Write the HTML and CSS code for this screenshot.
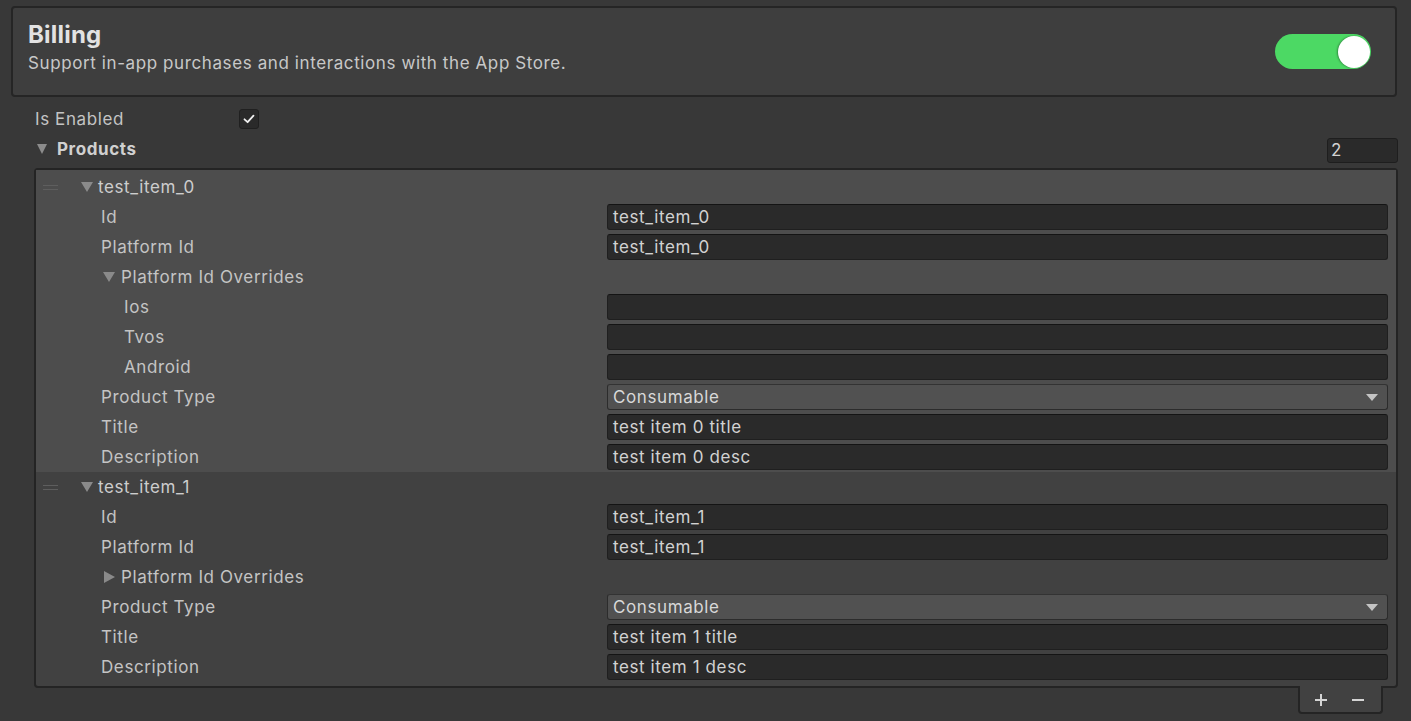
FILE: index.html
```html
<!DOCTYPE html>
<html>
<head>
<meta charset="utf-8">
<link rel="stylesheet" href="styles.css">
</head>
<body>
<div class="page">
  <header class="header">
    <div class="header-text">
      <div class="title">Billing</div>
      <div class="subtitle">Support in-app purchases and interactions with the App Store.</div>
    </div>
    <div class="toggle"><div class="knob"></div></div>
  </header>

  <div class="prop-row enabled-row">
    <span class="lbl">Is Enabled</span>
    <span class="checkbox">
      <svg width="14" height="14" viewBox="0 0 14 14"><path d="M2.5 7.3 L5.6 10.2 L11.5 3.6" fill="none" stroke="#f0f0f0" stroke-width="1.8" stroke-linecap="round" stroke-linejoin="round"/></svg>
    </span>
  </div>

  <div class="prop-row products-row">
    <span class="tri down"></span>
    <span class="lbl bold">Products</span>
    <span class="count">2</span>
  </div>

  <div class="list">
    <div class="item item-hl">
      <div class="row item-head">
        <div class="labelcell"><span class="handle"></span><span class="tri down small"></span><span class="name">test_item_0</span></div>
      </div>
      <div class="row"><div class="labelcell l1">Id</div><div class="field">test_item_0</div></div>
      <div class="row"><div class="labelcell l1">Platform Id</div><div class="field">test_item_0</div></div>
      <div class="row"><div class="labelcell l1f"><span class="tri down small"></span><span>Platform Id Overrides</span></div></div>
      <div class="row"><div class="labelcell l2">Ios</div><div class="field"></div></div>
      <div class="row"><div class="labelcell l2">Tvos</div><div class="field"></div></div>
      <div class="row"><div class="labelcell l2">Android</div><div class="field"></div></div>
      <div class="row"><div class="labelcell l1">Product Type</div><div class="field dropdown">Consumable<span class="arrow"></span></div></div>
      <div class="row"><div class="labelcell l1">Title</div><div class="field">test item 0 title</div></div>
      <div class="row"><div class="labelcell l1">Description</div><div class="field">test item 0 desc</div></div>
    </div>
    <div class="item">
      <div class="row item-head">
        <div class="labelcell"><span class="handle"></span><span class="tri down small"></span><span class="name">test_item_1</span></div>
      </div>
      <div class="row"><div class="labelcell l1">Id</div><div class="field">test_item_1</div></div>
      <div class="row"><div class="labelcell l1">Platform Id</div><div class="field">test_item_1</div></div>
      <div class="row"><div class="labelcell l1f"><span class="tri right small"></span><span>Platform Id Overrides</span></div></div>
      <div class="row"><div class="labelcell l1">Product Type</div><div class="field dropdown">Consumable<span class="arrow"></span></div></div>
      <div class="row"><div class="labelcell l1">Title</div><div class="field">test item 1 title</div></div>
      <div class="row"><div class="labelcell l1">Description</div><div class="field">test item 1 desc</div></div>
    </div>
  </div>
  <div class="footer-wrap">
    <div class="footer">
      <span class="btn">
        <svg width="14" height="14" viewBox="0 0 14 14"><path d="M7 1v12M1 7h12" stroke="#d4d4d4" stroke-width="2"/></svg>
      </span>
      <span class="btn">
        <svg width="14" height="14" viewBox="0 0 14 14"><path d="M1 7h12" stroke="#d4d4d4" stroke-width="2"/></svg>
      </span>
    </div>
  </div>
</div>
</body>
</html>
```

FILE: styles.css
```css
html, body {
  margin: 0;
  padding: 0;
  background: #383838;
  font-family: Inter, "Noto Sans", sans-serif;
  color: #c4c4c4;
  font-size: 17px;
  letter-spacing: 0.6px;
}
.page {
  width: 1411px;
  height: 721px;
  overflow: hidden;
}
.header {
  margin: 6px 14px 0 11px;
  height: 87px;
  border: 2px solid #252525;
  border-radius: 4px;
  background: #3e3e3e;
  display: flex;
  align-items: center;
  justify-content: space-between;
  padding: 0 24px 0 15px;
}
.header-text {
  display: flex;
  flex-direction: column;
  margin-top: -8px;
}
.title {
  font-size: 24px;
  font-weight: 700;
  color: #e2e2e2;
  line-height: 28px;
  letter-spacing: 0.2px;
}
.subtitle {
  font-size: 17px;
  color: #c8c8c8;
  line-height: 22px;
  margin-top: 3px;
}
.toggle {
  width: 96px;
  height: 35px;
  border-radius: 18px;
  background: #4cd964;
  display: flex;
  align-items: center;
  justify-content: flex-end;
  padding: 0 1px;
  box-sizing: border-box;
}
.knob {
  width: 32px;
  height: 32px;
  border-radius: 50%;
  background: #ffffff;
  box-shadow: -1px 0 2px rgba(0,0,0,0.35);
}
.prop-row {
  height: 30px;
  display: flex;
  align-items: center;
}
.enabled-row {
  margin-top: 7px;
  padding-left: 35px;
}
.enabled-row .lbl {
  width: 204px;
}
.checkbox {
  width: 20px;
  height: 20px;
  box-sizing: border-box;
  border: 1px solid #202020;
  border-radius: 3px;
  background: #2a2a2a;
  display: flex;
  align-items: center;
  justify-content: center;
}
.products-row {
  padding-left: 37px;
  padding-right: 13px;
}
.bold {
  font-weight: 700;
  color: #d0d0d0;
  margin-left: 10px;
  flex: 1;
}
.count {
  width: 66px;
  height: 23px;
  border: 1px solid #1e1e1e;
  border-radius: 3px;
  background: #2a2a2a;
  color: #d2d2d2;
  padding-left: 3px;
  line-height: 23px;
  margin-top: 2px;
}
.tri {
  display: inline-block;
  width: 0;
  height: 0;
}
.tri.down {
  border-left: 5.5px solid transparent;
  border-right: 5.5px solid transparent;
  border-top: 10px solid #8c8c8c;
}
.tri.down.small {
  border-left: 6px solid transparent;
  border-right: 6px solid transparent;
  border-top: 10px solid #8a8a8a;
}
.tri.right {
  border-top: 6px solid transparent;
  border-bottom: 6px solid transparent;
  border-left: 11px solid #8a8a8a;
  margin-left: 1px;
}
.list {
  margin: 4px 13px 0 34px;
  border: 2px solid #242424;
  border-radius: 4px;
  background: #414141;
  padding-bottom: 4px;
}
.item-hl {
  background: #4d4d4d;
  padding-top: 2px;
}
.row {
  height: 30px;
  display: grid;
  grid-template-columns: 571px 1fr;
  align-items: center;
  padding-right: 8px;
}
.labelcell {
  display: flex;
  align-items: center;
  white-space: nowrap;
}
.l1 { padding-left: 65px; }
.l2 { padding-left: 88px; }
.l1f { padding-left: 67px; }
.l1f .tri { margin-right: 6px; }
.handle {
  width: 15px;
  border-top: 1px solid #5e5e5e;
  border-bottom: 1px solid #5e5e5e;
  margin-left: 7px;
  margin-right: 23px;
  box-sizing: content-box;
  height: 3px;
}
.item-head .tri { margin-right: 5px; }
.name { color: #cdcdcd; }
.field {
  height: 24px;
  border: 1px solid #1f1f1f;
  border-top-color: #141414;
  border-radius: 3px;
  background: #2a2a2a;
  color: #d2d2d2;
  line-height: 24px;
  padding-left: 5px;
  box-sizing: content-box;
}
.field.dropdown {
  background: #515151;
  border-color: #2c2c2c;
  border-top-color: #333333;
  display: flex;
  justify-content: space-between;
  align-items: center;
  padding-right: 9px;
  color: #d8d8d8;
}
.arrow {
  width: 0;
  height: 0;
  border-left: 6px solid transparent;
  border-right: 6px solid transparent;
  border-top: 7px solid #c4c4c4;
}
.footer-wrap {
  display: flex;
  justify-content: flex-end;
  padding-right: 28px;
}
.footer {
  width: 85px;
  height: 28px;
  box-sizing: border-box;
  margin-top: -2px;
  background: #414141;
  border: 2px solid #242424;
  border-top: none;
  border-radius: 0 0 4px 4px;
  display: flex;
  align-items: center;
  padding: 2px 0 0 2px;
}
.btn {
  width: 37px;
  display: flex;
  justify-content: center;
  align-items: center;
}
```
